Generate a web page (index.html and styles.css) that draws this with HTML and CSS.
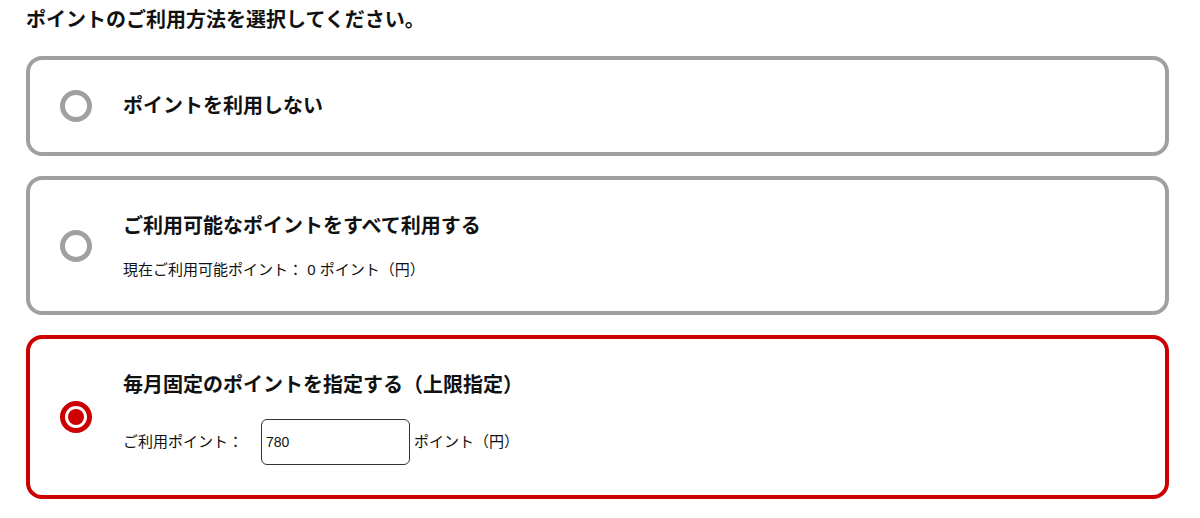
FILE: index.html
```html
<!DOCTYPE html>
<html lang="ja">
<head>
<meta charset="utf-8">
<title>ポイント利用方法</title>
<link rel="stylesheet" href="styles.css">
</head>
<body>
<main class="page">
  <h1 class="heading">ポイントのご利用方法を選択してください。</h1>
  <div class="options">
    <label class="option">
      <span class="radio"></span>
      <span class="body">
        <span class="title">ポイントを利用しない</span>
      </span>
    </label>
    <label class="option">
      <span class="radio"></span>
      <span class="body">
        <span class="title">ご利用可能なポイントをすべて利用する</span>
        <span class="sub">現在ご利用可能ポイント： 0 ポイント（円）</span>
      </span>
    </label>
    <label class="option is-selected">
      <span class="radio"><span class="dot"></span></span>
      <span class="body">
        <span class="title">毎月固定のポイントを指定する（上限指定）</span>
        <span class="sub sub-input">
          <span class="field-label">ご利用ポイント：</span>
          <input class="points" type="text" value="780">
          <span class="unit">ポイント（円）</span>
        </span>
      </span>
    </label>
  </div>
</main>
</body>
</html>
```

FILE: styles.css
```css
* { box-sizing: border-box; }

html, body {
  margin: 0;
  padding: 0;
  background: #ffffff;
}

body {
  font-family: "Liberation Sans", "Noto Sans CJK JP", sans-serif;
  color: #111111;
}

.page {
  width: 1169px;
  padding: 5px 0 0 26px;
}

.heading {
  margin: 0 0 21px 0;
  font-size: 20px;
  line-height: 30px;
  font-weight: 700;
  color: #111111;
}

.options {
  display: flex;
  flex-direction: column;
  gap: 20px;
}

.option {
  display: flex;
  align-items: center;
  gap: 31px;
  padding: 30px 30px 30px 30px;
  border: 4px solid #a0a0a0;
  border-radius: 16px;
  background: #ffffff;
}

.option.is-selected {
  border-color: #cc0000;
}

.radio {
  flex: none;
  width: 32px;
  height: 32px;
  border-radius: 50%;
  border: 5px solid #a0a0a0;
  background: #ffffff;
  display: flex;
  align-items: center;
  justify-content: center;
}

.is-selected .radio {
  border-color: #cc0000;
}

.dot {
  width: 16px;
  height: 16px;
  border-radius: 50%;
  background: #cc0000;
}

.body {
  display: flex;
  flex-direction: column;
}

.title {
  font-size: 20px;
  line-height: 32px;
  font-weight: 700;
  color: #111111;
}

.sub {
  margin-top: 17px;
  font-size: 15px;
  line-height: 22px;
  color: #111111;
}

.sub-input {
  display: flex;
  align-items: center;
  margin-top: 18px;
}

.field-label {
  margin-right: 18px;
}

.points {
  width: 149px;
  height: 46px;
  margin: 0 4px 0 0;
  padding: 0 4px;
  border: 1px solid #333333;
  border-radius: 6px;
  font-family: "Liberation Sans", "Noto Sans CJK JP", sans-serif;
  font-size: 14px;
  color: #111111;
  background: #ffffff;
  outline: none;
}
```
